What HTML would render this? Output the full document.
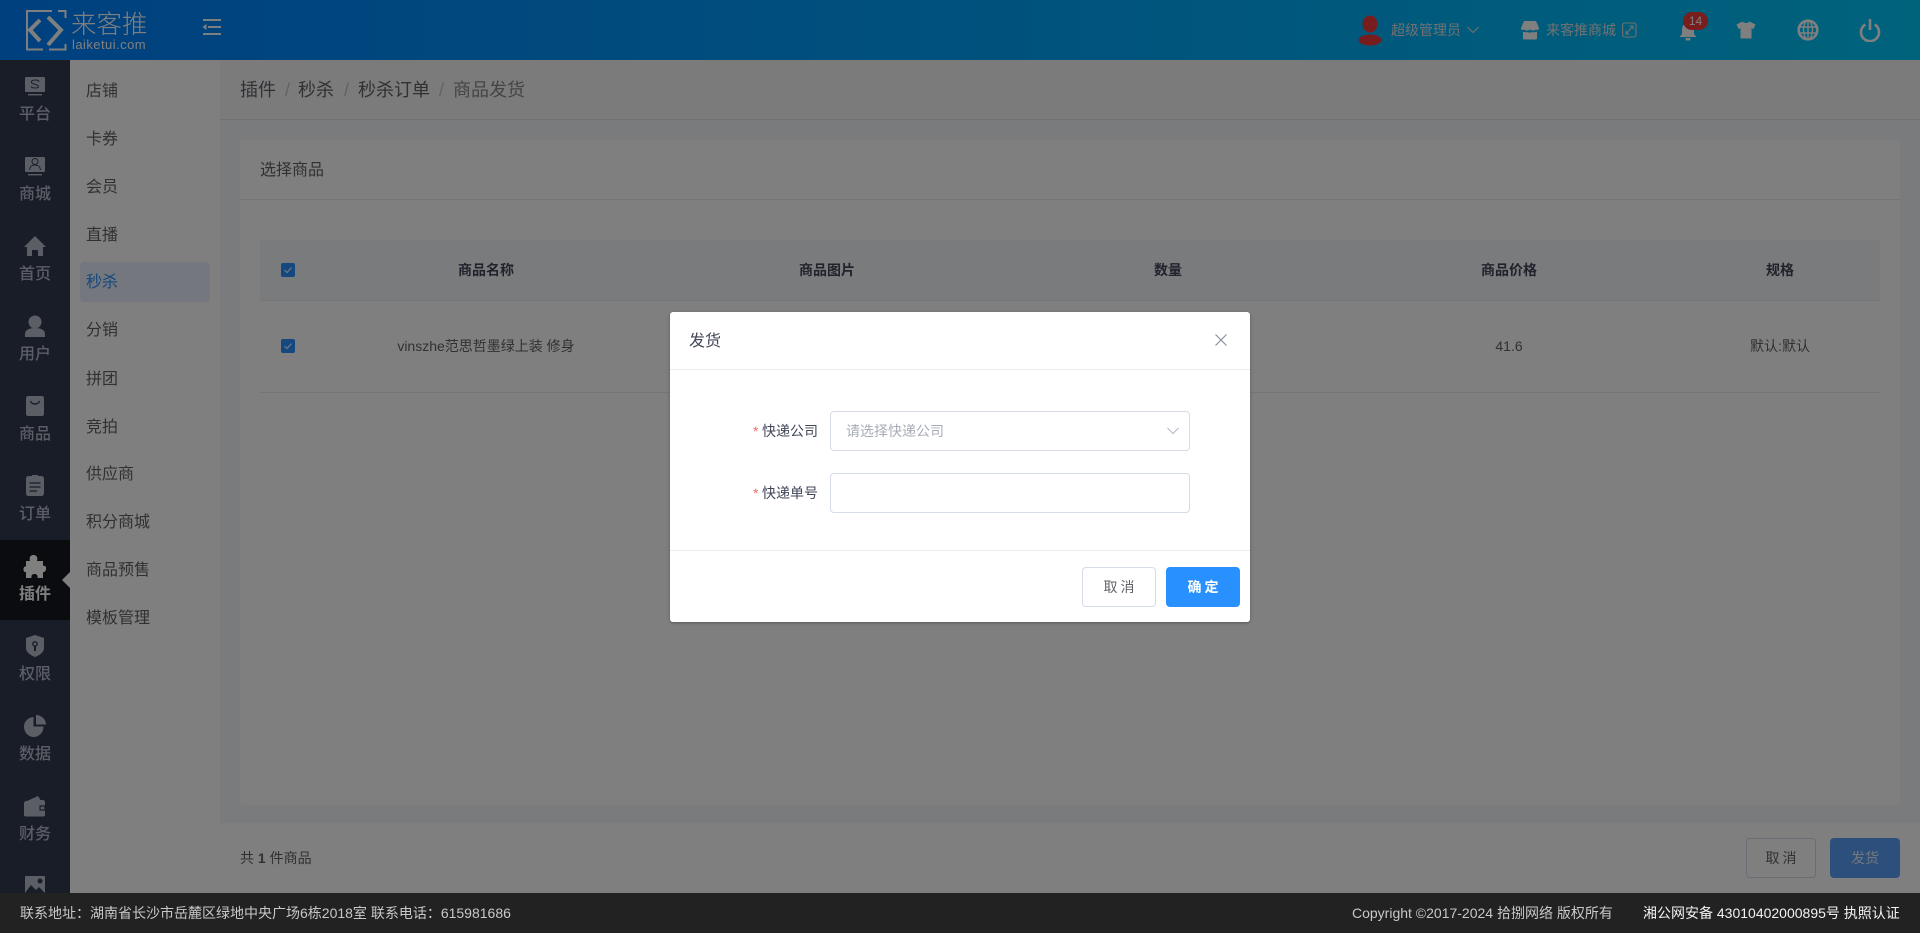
<!DOCTYPE html>
<html lang="zh-CN">
<head>
<meta charset="utf-8">
<title>商品发货</title>
<style>
*{box-sizing:border-box}
html,body{margin:0;padding:0;width:1920px;height:933px;overflow:hidden;background:#fff;font-family:"Liberation Sans","Noto Sans CJK SC",sans-serif;font-size:14px;color:#414658}
.a{position:absolute;white-space:nowrap}
.t{position:absolute;white-space:nowrap;line-height:20px;height:20px}
.c{text-align:center;transform:translateX(-50%)}
#header{position:absolute;left:0;top:0;width:1920px;height:60px;background:linear-gradient(90deg,#0080fe 0%,#00c6f8 100%)}
#side{position:absolute;left:0;top:60px;width:70px;height:873px;background:#323a4e}
.st{position:absolute;left:0;width:70px;text-align:center;font-size:16px;line-height:20px;color:#b6bdcb;font-weight:500}
#sub{position:absolute;left:70px;top:60px;width:150px;height:873px;background:#fff}
.sm{position:absolute;left:86px;font-size:16px;line-height:20px;color:#606266}
#main{position:absolute;left:220px;top:60px;width:1700px;height:833px;background:#f4f7f9}
.ov{position:absolute;left:0;top:0;width:1920px;height:933px;background:rgba(0,0,0,.5)}
#footer{position:absolute;left:0;top:893px;width:1920px;height:40px;background:#222;color:#c8c8c8;font-size:14px;line-height:40px}
#modal{position:absolute;left:670px;top:312px;width:580px;height:310px;background:#fff;border-radius:3px;box-shadow:0 1px 3px rgba(0,0,0,.3)}
.inp{position:absolute;left:160px;width:360px;height:40px;border:1px solid #d5dbe8;border-radius:4px;background:#fff}
.btn{position:absolute;height:40px;line-height:38px;text-align:center;border-radius:4px;font-size:14px}
</style>
</head>
<body>

<div id="header"></div>

<!-- logo -->
<svg class="a" style="left:24px;top:8px" width="46" height="44" viewBox="0 0 46 44" fill="none">
<path d="M28 3H3V41.500H19M25 41.500H41.500V36M41.500 10V3H34" stroke="#fff" stroke-width="2"/>
<path d="M16 12L6 22L16 33" stroke="#fff" stroke-width="4"/>
<path d="M24 9L37 22L24 37" stroke="#fff" stroke-width="4"/>
</svg>
<div class="t" style="left:71px;top:12px;height:26px;line-height:26px;font-size:25.5px;color:#fff;font-weight:300">来客推</div>
<div class="t" style="left:72px;top:36px;font-size:13px;line-height:18px;height:18px;letter-spacing:.45px;color:#fff">laiketui.com</div>
<svg class="a" style="left:201px;top:18px" width="20" height="18" viewBox="0 0 20 18" fill="#fff">
<rect x="2" y="1" width="18" height="2"/><rect x="7" y="8" width="13" height="2"/><rect x="2" y="15" width="18" height="2"/><path d="M5.500 6V12L1.500 9Z"/>
</svg>

<!-- top right -->
<svg class="a" style="left:1358px;top:15px" width="24" height="31" viewBox="0 0 24 31" fill="#f03a3a">
<ellipse cx="12" cy="9" rx="7.500" ry="8.500"/><ellipse cx="12" cy="25" rx="11.500" ry="5.500"/>
</svg>
<div class="t" style="left:1391px;top:20px;color:#e2e2e2">超级管理员</div>
<svg class="a" style="left:1466px;top:25px" width="14" height="10" viewBox="0 0 14 10" fill="none"><path d="M1.500 2L7 7.500L12.500 2" stroke="#e2e2e2" stroke-width="1.100"/></svg>
<svg class="a" style="left:1521px;top:20px" width="18" height="20" viewBox="0 0 18 20" fill="#fff">
<path d="M3 1H15L18 8C18 10 16.800 10.500 15 9.500C13 11 11 11 9 9.500C7 11 5 11 3 9.500C1.200 10.500 0 10 0 8Z"/><path d="M2 11.500C4 12.500 5.500 12.500 6.500 12C8 12.800 10 12.800 11.500 12C12.500 12.500 14 12.500 16 11.500V18C16 19 15.500 19.500 15 19.500H3C2.500 19.500 2 19 2 18Z"/>
</svg>
<div class="t" style="left:1546px;top:20px;color:#e2e2e2">来客推商城</div>
<svg class="a" style="left:1622px;top:22px" width="15" height="16" viewBox="0 0 15 16" fill="none" stroke="#e2e2e2" stroke-width="1.100">
<rect x=".6" y="1" width="13.400" height="14" rx="2"/><path d="M4 12L11 4M7.500 4H11V7.500M4 8.500V12H7.500"/>
</svg>
<svg class="a" style="left:1678px;top:22px" width="20" height="20" viewBox="0 0 20 20" fill="#fff">
<path d="M10 1C6 1 4 4 4 8V12L1.500 15H18.500L16 12V8C16 4 14 1 10 1Z"/><rect x="7.500" y="16" width="5" height="2.500" rx="1"/>
</svg>
<div class="a" style="left:1683px;top:12px;width:25px;height:18px;border-radius:9px;background:#f23a3a;color:#fff;font-size:12px;line-height:18px;text-align:center">14</div>
<svg class="a" style="left:1736px;top:21px" width="20" height="18" viewBox="0 0 20 18" fill="#fff">
<path d="M6.500 0.500C8 2.500 12 2.500 13.500 0.500L19.500 3.500L17.500 8L15.500 7.200V17.500H4.500V7.200L2.500 8L0.500 3.500Z"/>
</svg>
<svg class="a" style="left:1797px;top:19px" width="22" height="22" viewBox="0 0 22 22" fill="none" stroke="#fff">
<circle cx="11" cy="11" r="9.300" stroke-width="2.600"/><ellipse cx="11" cy="11" rx="4.500" ry="9" stroke-width="1.400"/><path d="M11 2V20M2.500 8H19.500M2.500 14H19.500" stroke-width="1.400"/>
</svg>
<svg class="a" style="left:1859px;top:18px" width="22" height="24" viewBox="0 0 22 24" fill="none" stroke="#fff" stroke-width="2.600">
<path d="M6.300 6.500A9 9 0 1 0 15.700 6.500"/><path d="M11 1V12"/>
</svg>

<!-- left sidebar -->
<div id="side"></div>
<div class="a" style="left:0;top:540px;width:70px;height:80px;background:#141820"></div>
<svg class="a" style="left:0;top:60px" width="70" height="833" viewBox="0 60 70 833" fill="#b6bdcb">
<rect x="25" y="77" width="20" height="15" rx="1"/><rect x="28" y="94" width="14" height="1.400"/>
<rect x="25" y="157" width="20" height="15" rx="1"/><rect x="28" y="174" width="14" height="1.400"/>
<path d="M35 236L46 247H43V256H38V250H32V256H27V247H24Z"/>
<circle cx="35" cy="322" r="6.500"/><path d="M25 337V334C25 330 29 328 35 328C41 328 45 330 45 334V337Z"/>
<path d="M28 396H42C43 396 44 397 44 398V414C44 415 43 416 42 416H28C27 416 26 415 26 414V398C26 397 27 396 28 396Z"/>
<path d="M29 476H32V475H38V476H41C43 476 44 477 44 479V493C44 495 43 496 41 496H29C27 496 26 495 26 493V479C26 477 27 476 29 476Z"/>
<path d="M30 561C29 558 30 555 33.500 555C37 555 38 558 37 561H43V566C45.500 565 46.500 567.500 46 569C46 571.500 44 572.500 43 572V578H37.500C38 575 36.500 574 34.500 574C32.500 574 31 575 31.500 578H26V572C23.500 572.500 23.500 570 23.500 569C23.500 567 25 566 26 566.500V561Z" fill="#fff"/>
<path d="M35 635L44 638V648C44 652 40 655 35 657C30 655 26 652 26 648V638Z"/>
<path d="M33.500 717V726.500H43.500C43.500 732.500 39 737 33.800 737C28 737 24 732 24 726.500C24 721.500 28 717.500 33.500 717Z"/><path d="M36 715C41.500 715 46 719.500 46 724.500H36Z"/>
<path d="M27 801L38 796L40.500 800H43C44 800 45 801 45 802V815C45 816 44 816.500 43 816.500H26C25 816.500 24 816 24 815V803C24 802 25 801 27 801Z"/>
<rect x="25" y="876" width="20" height="18"/>
</svg>
<svg class="a" style="left:0;top:60px" width="70" height="833" viewBox="0 60 70 833" fill="none" stroke="#323a4e">
<path d="M39 82C39 80.500 37.500 80 35 80C32.500 80 31 81 31.500 82.500C32 84.500 38.500 84 38.500 86.500C38.500 88.500 32 88.500 31 86.500" stroke-width="1"/>
<circle cx="35" cy="161.500" r="3" stroke-width="1"/><path d="M29.500 170C30 166 32 165 35 165C38 165 40 166 40.500 170" stroke-width="1"/>
<path d="M30.500 401C31.500 405 38.500 405 39.500 401" stroke-width="1.500"/>
<path d="M29.500 483H40.500M29.500 487H40.500M29.500 491H37" stroke-width="1.300"/>
<circle cx="35" cy="644" r="2.200" stroke-width="1.400"/><path d="M35 646V651" stroke-width="2"/>
<path d="M40 806H45V810H40Z" stroke-width="1.200"/>
<path d="M25 893L31 885L36 890L39 887L45 893" stroke-width="0" fill="#323a4e"/><circle cx="40" cy="881" r="2.500" fill="#323a4e" stroke="none"/>
</svg>
<div class="st" style="top:105px">平台</div>
<div class="st" style="top:185px">商城</div>
<div class="st" style="top:265px">首页</div>
<div class="st" style="top:345px">用户</div>
<div class="st" style="top:425px">商品</div>
<div class="st" style="top:505px">订单</div>
<div class="st" style="top:585px;color:#fff;font-weight:700">插件</div>
<div class="st" style="top:665px">权限</div>
<div class="st" style="top:745px">数据</div>
<div class="st" style="top:825px">财务</div>

<!-- sub menu -->
<div id="sub"></div>
<div class="a" style="left:62px;top:572px;width:0;height:0;border-top:8px solid transparent;border-bottom:8px solid transparent;border-right:8px solid #fff"></div>
<div class="a" style="left:80px;top:262px;width:130px;height:40px;border-radius:4px;background:#e8effa"></div>
<div class="sm" style="top:82px">店铺</div>
<div class="sm" style="top:130px">卡券</div>
<div class="sm" style="top:178px">会员</div>
<div class="sm" style="top:226px">直播</div>
<div class="sm" style="top:273px;color:#2890ff">秒杀</div>
<div class="sm" style="top:321px">分销</div>
<div class="sm" style="top:370px">拼团</div>
<div class="sm" style="top:418px">竞拍</div>
<div class="sm" style="top:465px">供应商</div>
<div class="sm" style="top:513px">积分商城</div>
<div class="sm" style="top:561px">商品预售</div>
<div class="sm" style="top:609px">模板管理</div>

<!-- main -->
<div id="main"></div>
<div class="a" style="left:220px;top:60px;width:1700px;height:60px;background:#f6f7f9;border-bottom:1px solid #e1e4e8"></div>
<div class="t" style="left:240px;top:80px;font-size:18px;color:#606266">插件</div>
<div class="t" style="left:285px;top:80px;font-size:18px;color:#c0c4cc">/</div>
<div class="t" style="left:298px;top:80px;font-size:18px;color:#606266">秒杀</div>
<div class="t" style="left:344px;top:80px;font-size:18px;color:#c0c4cc">/</div>
<div class="t" style="left:358px;top:80px;font-size:18px;color:#606266">秒杀订单</div>
<div class="t" style="left:439px;top:80px;font-size:18px;color:#c0c4cc">/</div>
<div class="t" style="left:453px;top:80px;font-size:18px;color:#888">商品发货</div>

<!-- card -->
<div class="a" style="left:240px;top:140px;width:1660px;height:665px;background:#fff;border-radius:4px"></div>
<div class="a" style="left:240px;top:199px;width:1660px;height:1px;background:#e9ecef"></div>
<div class="t" style="left:260px;top:161px;font-size:16px;color:#606266">选择商品</div>

<div class="a" style="left:260px;top:240px;width:1620px;height:61px;background:#f4f7f9;border-bottom:1px solid #eceff2"></div>
<div class="a" style="left:260px;top:392px;width:1620px;height:1px;background:#e9ecef"></div>
<svg class="a" style="left:281px;top:263px" width="14" height="14" viewBox="0 0 14 14"><rect width="14" height="14" rx="2" fill="#2890ff"/><path d="M3.500 7L6 9.500L10.500 4.500" fill="none" stroke="#fff" stroke-width="1"/></svg>
<svg class="a" style="left:281px;top:339px" width="14" height="14" viewBox="0 0 14 14"><rect width="14" height="14" rx="2" fill="#2890ff"/><path d="M3.500 7L6 9.500L10.500 4.500" fill="none" stroke="#fff" stroke-width="1"/></svg>
<div class="t c" style="left:486px;top:260px;font-weight:700;color:#414658">商品名称</div>
<div class="t c" style="left:827px;top:260px;font-weight:700;color:#414658">商品图片</div>
<div class="t c" style="left:1168px;top:260px;font-weight:700;color:#414658">数量</div>
<div class="t c" style="left:1509px;top:260px;font-weight:700;color:#414658">商品价格</div>
<div class="t c" style="left:1780px;top:260px;font-weight:700;color:#414658">规格</div>
<div class="t c" style="left:486px;top:336px;color:#606266">vinszhe范思哲墨绿上装 修身</div>
<div class="t c" style="left:1509px;top:336px;color:#606266">41.6</div>
<div class="t c" style="left:1780px;top:336px;color:#606266">默认:默认</div>

<!-- bottom bar -->
<div class="a" style="left:220px;top:823px;width:1700px;height:70px;background:#fff"></div>
<div class="t" style="left:240px;top:848px;color:#606266">共 <b>1</b> 件商品</div>
<div class="btn" style="left:1746px;top:838px;width:70px;border:1px solid #d5dbe8;background:#fff;color:#606266;letter-spacing:3px;text-indent:3px">取消</div>
<div class="btn" style="left:1830px;top:838px;width:70px;background:#5a9ef8;color:#e8eef8;line-height:40px">发货</div>

<div class="ov"></div>

<!-- footer -->
<div id="footer">
<div class="a" style="left:20px;top:0">联系地址：湖南省长沙市岳麓区绿地中央广场6栋2018室 联系电话：615981686</div>
<div class="a" style="left:1352px;top:0">Copyright ©2017-2024 拾捌网络 版权所有</div>
<div class="a" style="left:1643px;top:0;color:#f2f2f2">湘公网安备 43010402000895号 执照认证</div>
</div>

<!-- modal -->
<div id="modal">
<div class="t" style="left:19px;top:20px;font-size:16px;color:#414658">发货</div>
<svg class="a" style="left:544px;top:21px" width="14" height="14" viewBox="0 0 14 14" fill="none"><path d="M1.500 1.500L12.500 12.500M12.500 1.500L1.500 12.500" stroke="#8a8f9c" stroke-width="1.200"/></svg>
<div class="a" style="left:0;top:57px;width:580px;height:1px;background:#e9ecef"></div>
<div class="t" style="left:83px;top:109px;color:#f56c6c">*</div>
<div class="t" style="left:92px;top:109px;color:#414658">快递公司</div>
<div class="inp" style="top:99px"></div>
<div class="t" style="left:176px;top:109px;color:#a8acb8">请选择快递公司</div>
<svg class="a" style="left:496px;top:114px" width="14" height="10" viewBox="0 0 14 10" fill="none"><path d="M1.500 2L7 7.500L12.500 2" stroke="#b4bac6" stroke-width="1.100"/></svg>
<div class="t" style="left:83px;top:171px;color:#f56c6c">*</div>
<div class="t" style="left:92px;top:171px;color:#414658">快递单号</div>
<div class="inp" style="top:161px"></div>
<div class="a" style="left:0;top:238px;width:580px;height:1px;background:#e9ecef"></div>
<div class="btn" style="left:412px;top:255px;width:74px;border:1px solid #d5dbe8;background:#fff;color:#606266;letter-spacing:3px;text-indent:3px">取消</div>
<div class="btn" style="left:496px;top:255px;width:74px;background:#2890ff;color:#fff;line-height:40px;font-weight:700;letter-spacing:3px;text-indent:3px">确定</div>
</div>

</body>
</html>
